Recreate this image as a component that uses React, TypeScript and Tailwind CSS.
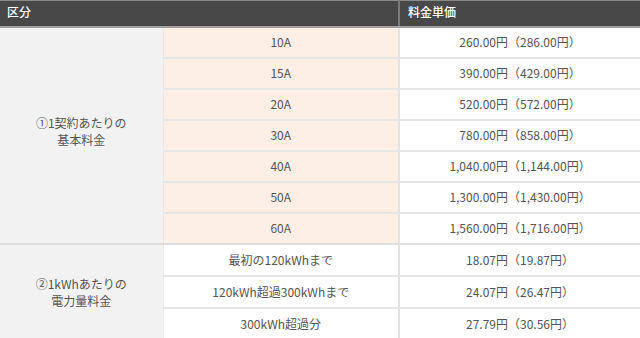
import React from 'react';

const basicRows = [
  { amp: '10A', price: '260.00円（286.00円）' },
  { amp: '15A', price: '390.00円（429.00円）' },
  { amp: '20A', price: '520.00円（572.00円）' },
  { amp: '30A', price: '780.00円（858.00円）' },
  { amp: '40A', price: '1,040.00円（1,144.00円）' },
  { amp: '50A', price: '1,300.00円（1,430.00円）' },
  { amp: '60A', price: '1,560.00円（1,716.00円）' },
];

const usageRows = [
  { label: '最初の120kWhまで', price: '18.07円（19.87円）' },
  { label: '120kWh超過300kWhまで', price: '24.07円（26.47円）' },
  { label: '300kWh超過分', price: '27.79円（30.56円）' },
];

const cell = 'h-[31px] border-b-2 border-[#e6e6e6] text-center align-middle p-0';
const cell2 = 'h-[32px] border-b-2 border-[#e6e6e6] text-center align-middle p-0 pt-[1px]';

const App: React.FC = () => {
  return (
    <div
      className="w-[640px] h-[338px] overflow-hidden bg-white text-[12px] text-[#555]"
      style={{ fontFamily: '"Noto Sans CJK JP", "Noto Sans", sans-serif' }}
    >
      <table className="w-full border-collapse table-fixed">
        <colgroup>
          <col className="w-[163px]" />
          <col className="w-[236px]" />
          <col />
        </colgroup>
        <thead>
          <tr className="bg-[#484848] text-white">
            <th
              colSpan={2}
              className="h-[26px] border-t border-[#8a8a8a] border-b-2 border-b-[#a0a0a0] border-r-2 border-r-[#7a7a7a] text-left font-medium px-[7px] pb-[3px]"
            >
              区分
            </th>
            <th className="h-[26px] border-t border-[#8a8a8a] border-b-2 border-b-[#a0a0a0] text-left font-medium px-[8px] pb-[3px]">
              料金単価
            </th>
          </tr>
        </thead>
        <tbody>
          {basicRows.map((r, i) => (
            <tr key={r.amp}>
              {i === 0 && (
                <td
                  rowSpan={basicRows.length}
                  className="bg-[#f2f2f2] border-b-2 border-[#dedede] border-r border-r-[#e8e8e8] text-center align-middle leading-[17px] pb-[8px]"
                >
                  ①1契約あたりの
                  <br />
                  基本料金
                </td>
              )}
              <td
                className={`${cell} bg-[#fdeee6] border-r-2 border-r-[#e3e3e3] ${
                  i === basicRows.length - 1 ? 'border-b-[#dedede]' : ''
                }`}
              >
                {r.amp}
              </td>
              <td className={`${cell} ${i === basicRows.length - 1 ? 'border-b-[#dedede]' : ''}`}>
                {r.price}
              </td>
            </tr>
          ))}
          {usageRows.map((r, i) => (
            <tr key={r.label}>
              {i === 0 && (
                <td
                  rowSpan={usageRows.length}
                  className="bg-[#f2f2f2] border-r border-r-[#e8e8e8] text-center align-middle leading-[17px] pb-[1px]"
                >
                  ②1kWhあたりの
                  <br />
                  電力量料金
                </td>
              )}
              <td className={`${cell2} border-r-2 border-r-[#e3e3e3]`}>{r.label}</td>
              <td className={cell2}>{r.price}</td>
            </tr>
          ))}
        </tbody>
      </table>
    </div>
  );
};

export default App;
